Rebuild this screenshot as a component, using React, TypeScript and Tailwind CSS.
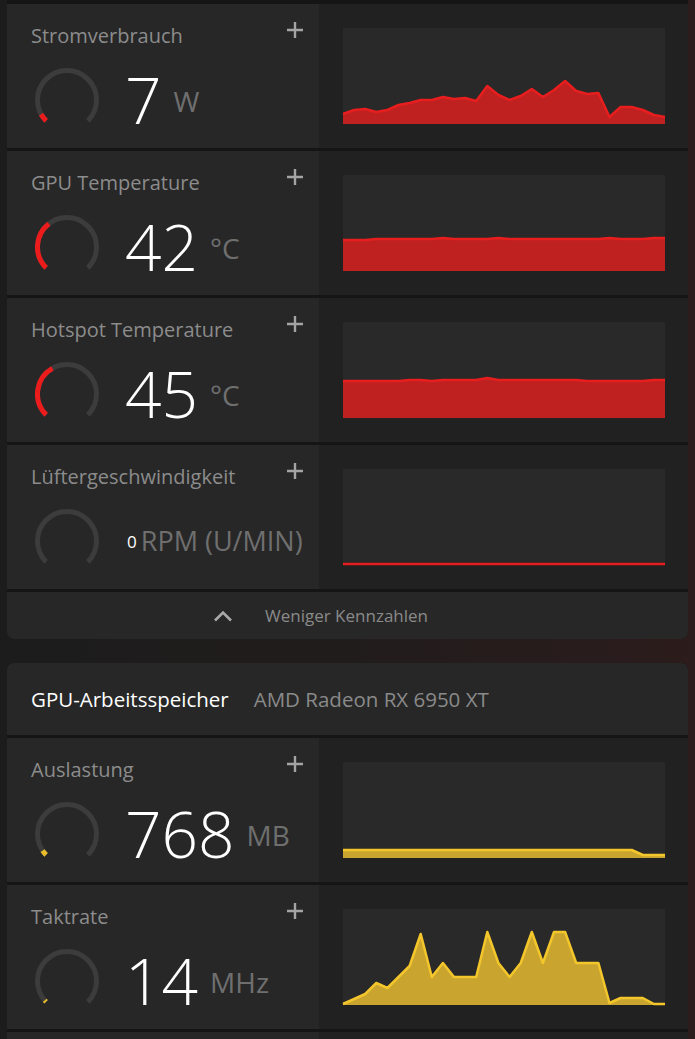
import React from 'react';

type Metric = {
  title: string;
  value: string;
  unit: string;
  fraction: number;
  color: 'red' | 'yellow';
  data: number[];
  small?: boolean;
};

const COLORS = {
  red: { stroke: '#e81e1e', fill: '#bf2121', gauge: '#ec1c1c' },
  yellow: { stroke: '#f3c62b', fill: '#c9a52f', gauge: '#e9bd2a' },
};

const gpuMetrics: Metric[] = [
  {
    title: 'Stromverbrauch',
    value: '7',
    unit: 'W',
    fraction: 0.06,
    color: 'red',
    data: [86, 82, 81, 84, 82, 77, 75, 72, 72, 69, 71, 70, 73, 58, 67, 72, 68, 61, 69, 62, 53, 63, 66, 65, 89, 79, 79, 82, 87, 89],
  },
  {
    title: 'GPU Temperature',
    value: '42',
    unit: '°C',
    fraction: 0.36,
    color: 'red',
    data: [65, 65, 65, 64, 64, 64, 64, 64, 64, 63, 64, 64, 64, 64, 63, 64, 64, 64, 64, 64, 64, 64, 64, 64, 63, 64, 64, 64, 63, 63],
  },
  {
    title: 'Hotspot Temperature',
    value: '45',
    unit: '°C',
    fraction: 0.39,
    color: 'red',
    data: [59, 59, 59, 59, 59, 59, 58, 58, 59, 58, 58, 58, 58, 56, 58, 58, 58, 58, 58, 58, 58, 58, 59, 59, 59, 59, 59, 59, 58, 58],
  },
  {
    title: 'Lüftergeschwindigkeit',
    value: '0',
    unit: 'RPM (U/MIN)',
    fraction: 0,
    color: 'red',
    small: true,
    data: Array(30).fill(95),
  },
];

const memMetrics: Metric[] = [
  {
    title: 'Auslastung',
    value: '768',
    unit: 'MB',
    fraction: 0.04,
    color: 'yellow',
    data: [...Array(27).fill(88), 93, 93, 93],
  },
  {
    title: 'Taktrate',
    value: '14',
    unit: 'MHz',
    fraction: 0.015,
    color: 'yellow',
    data: [95, 90, 85, 74, 79, 68, 57, 25, 68, 54, 68, 68, 68, 23, 54, 68, 54, 23, 54, 23, 23, 54, 54, 54, 94, 89, 89, 89, 95, 95],
  },
];

function arcPoint(deg: number, r: number) {
  const a = (deg * Math.PI) / 180;
  return `${(32 + r * Math.cos(a)).toFixed(2)} ${(32 + r * Math.sin(a)).toFixed(2)}`;
}

function arcPath(from: number, to: number, r: number) {
  const large = to - from > 180 ? 1 : 0;
  return `M ${arcPoint(from, r)} A ${r} ${r} 0 ${large} 1 ${arcPoint(to, r)}`;
}

function Gauge({ fraction, color }: { fraction: number; color: string }) {
  const r = 29.5;
  return (
    <svg width="64" height="64" viewBox="0 0 64 64" className="shrink-0">
      <path d={arcPath(135, 405, r)} fill="none" stroke="#3c3c3c" strokeWidth="5" />
      {fraction > 0 && (
        <path d={arcPath(135, 135 + 270 * fraction, r)} fill="none" stroke={color} strokeWidth="5" />
      )}
    </svg>
  );
}

function Chart({ data, color }: { data: number[]; color: 'red' | 'yellow' }) {
  const w = 322;
  const h = 96;
  const step = w / (data.length - 1);
  const pts = data.map((y, i) => `${(i * step).toFixed(1)},${y}`).join(' ');
  const c = COLORS[color];
  return (
    <div className="w-[322px] h-[96px] bg-[#292929]">
      <svg width={w} height={h} viewBox={`0 0 ${w} ${h}`} className="block overflow-visible">
        <polygon points={`0,${h} ${pts} ${w},${h}`} fill={c.fill} />
        <polyline points={pts} fill="none" stroke={c.stroke} strokeWidth="2.5" strokeLinejoin="round" />
      </svg>
    </div>
  );
}

function PlusIcon() {
  return (
    <svg width="18" height="18" viewBox="0 0 18 18" className="-mt-[1px]">
      <path d="M9 1v16M1 9h16" stroke="#a4a4a4" strokeWidth="2.4" />
    </svg>
  );
}

function MetricRow({ m }: { m: Metric }) {
  const c = COLORS[m.color];
  return (
    <div className="flex h-[144px] shrink-0">
      {/* Left: title, gauge, value */}
      <div className="w-[312px] bg-[#272727] pl-[24px] pr-[15px] pt-[18px] flex flex-col">
        <div className="flex items-start justify-between">
          <span className="text-[20px] leading-[28px] text-[#8c8c8c]">{m.title}</span>
          <PlusIcon />
        </div>
        <div className="flex items-center mt-[18px] ml-[4px]">
          <Gauge fraction={m.fraction} color={c.gauge} />
          {m.small ? (
            <div className="flex items-center ml-[28px] gap-[4px]">
              <span className="text-[17px] leading-none text-white">{m.value}</span>
              <span className="text-[27px] leading-[28px] text-[#6f6f6f]">{m.unit}</span>
            </div>
          ) : (
            <div className="flex items-center ml-[26px] gap-[12px]">
              <span className="text-[64px] leading-[64px] font-light text-white">{m.value}</span>
              <span className="text-[28px] leading-[28px] text-[#6f6f6f] mt-[2px]">{m.unit}</span>
            </div>
          )}
        </div>
      </div>

      {/* Right: history chart */}
      <div className="flex-1 bg-[#212121] pl-[24px] pt-[24px]">
        <Chart data={m.data} color={m.color} />
      </div>
    </div>
  );
}

export default function App() {
  return (
    <div
      className="w-[695px] h-[1039px] overflow-hidden bg-linear-to-r from-[#1c1c1c] via-[#211c1c] to-[#2c1c1c] px-[7px]"
      style={{ fontFamily: '"Open Sans", "Noto Sans", sans-serif' }}
    >
      {/* GPU metrics */}
      <div className="flex flex-col gap-[3px] bg-[#151515] pt-[4px] rounded-b-[7px]">
        {gpuMetrics.map((m) => (
          <MetricRow key={m.title} m={m} />
        ))}
        <button className="h-[47px] bg-[#272727] rounded-b-[7px] flex items-center pl-[206px] gap-[32px] text-left">
          <svg width="20" height="12" viewBox="0 0 20 12">
            <polyline points="2,10.5 10,2.5 18,10.5" fill="none" stroke="#a9a9a9" strokeWidth="2.6" />
          </svg>
          <span className="text-[17px] text-[#8a8a8a]">Weniger Kennzahlen</span>
        </button>
      </div>

      {/* GPU memory */}
      <div className="mt-[24px] flex flex-col gap-[3px] bg-[#151515] rounded-t-[7px]">
        <div className="h-[72px] bg-[#272727] rounded-t-[7px] flex items-center pl-[24px] gap-[25px]">
          <span className="text-[20.5px] text-white">GPU-Arbeitsspeicher</span>
          <span className="text-[20.5px] text-[#8a8a8a]">AMD Radeon RX 6950 XT</span>
        </div>
        {memMetrics.map((m) => (
          <MetricRow key={m.title} m={m} />
        ))}
        {/* next row, only its top edge is in view */}
        <div className="flex h-[144px] shrink-0">
          <div className="w-[312px] bg-[#272727]" />
          <div className="flex-1 bg-[#212121]" />
        </div>
      </div>
    </div>
  );
}
